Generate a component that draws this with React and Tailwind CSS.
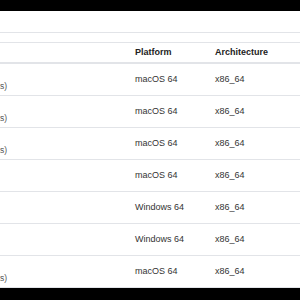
const rows = [
	{ file: 'Anaconda3-2019.10-MacOSX-x86_64.pkg', note: '(Graphical installer, 64 bits)', platform: 'macOS 64', arch: 'x86_64' },
	{ file: 'Anaconda3-2019.07-MacOSX-x86_64.pkg', note: '(Graphical installer, 64 bits)', platform: 'macOS 64', arch: 'x86_64' },
	{ file: 'Anaconda3-2019.03-MacOSX-x86_64.pkg', note: '(Graphical installer, 64 bits)', platform: 'macOS 64', arch: 'x86_64' },
	{ file: 'Anaconda3-2019.10-MacOSX-x86_64.sh', note: null, platform: 'macOS 64', arch: 'x86_64' },
	{ file: 'Anaconda3-2019.10-Windows-x86_64.exe', note: null, platform: 'Windows 64', arch: 'x86_64' },
	{ file: 'Anaconda3-2019.07-Windows-x86_64.exe', note: null, platform: 'Windows 64', arch: 'x86_64' },
	{ file: 'Anaconda3-2018.12-MacOSX-x86_64.pkg', note: '(Graphical installer, 64 bits)', platform: 'macOS 64', arch: 'x86_64' },
];

export default function App() {
	return (
		<div className="flex h-[300px] w-[300px] flex-col overflow-hidden bg-white font-['Liberation_Sans',Arial,sans-serif] text-[9px] text-[#333]">
			<div className="h-[11px] shrink-0 bg-black" />
			<div className="h-[22px] shrink-0 border-b border-[#e2e4e8]" />
			<div className="h-[10px] shrink-0 border-b border-[#e2e4e8]" />

			<div className="grid h-[21px] shrink-0 grid-cols-[127px_80px_1fr] items-center border-b-2 border-[#e2e4e8] font-bold text-[#222]">
				<div />
				<div className="px-2">Platform</div>
				<div className="px-2">Architecture</div>
			</div>

			{rows.map((row, i) => (
				<div
					key={i}
					className="grid h-[32px] shrink-0 grid-cols-[127px_80px_1fr] items-center border-b border-[#e2e4e8] last:border-b-0">
					<div className="flex justify-end pr-[120px]">
						<div className="flex w-[200px] shrink-0 flex-col whitespace-nowrap leading-[12px]">
							<span className="text-[#0d6efd]">{row.file}</span>
							{row.note && <span className="text-right text-[8.5px] text-[#555]">{row.note}</span>}
						</div>
					</div>
					<div className="px-2">{row.platform}</div>
					<div className="px-2">{row.arch}</div>
				</div>
			))}

			<div className="flex-1 bg-black" />
		</div>
	);
}
